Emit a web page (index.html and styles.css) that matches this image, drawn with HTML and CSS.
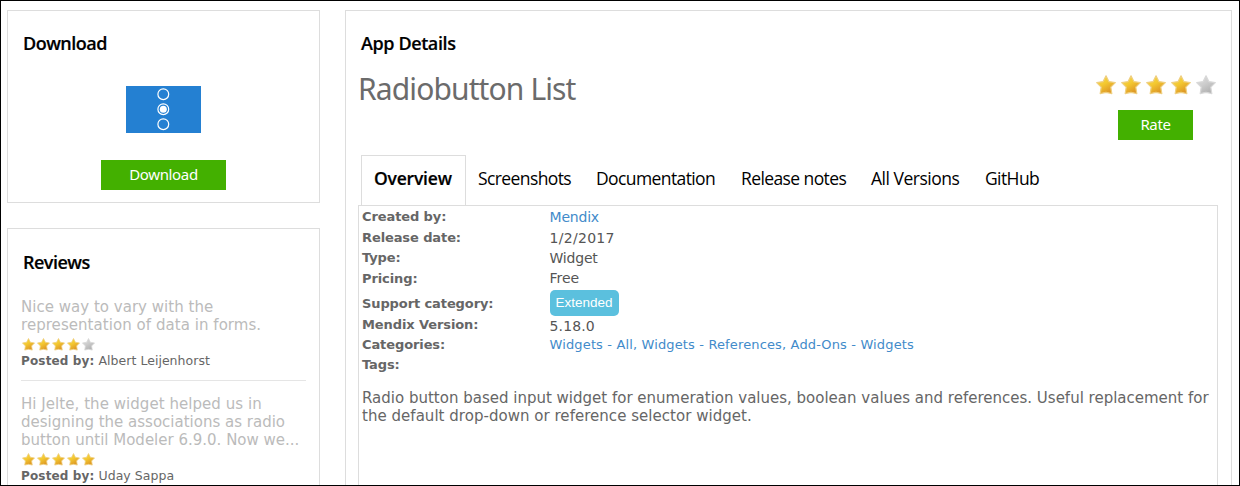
FILE: index.html
```html
<!DOCTYPE html>
<html lang="en">
<head>
<meta charset="utf-8">
<title>Radiobutton List</title>
<link rel="stylesheet" href="styles.css">
</head>
<body>
<svg class="defs" width="0" height="0" aria-hidden="true">
  <defs>
    <linearGradient id="gold" x1="0" y1="0" x2=".6" y2="1"><stop offset="0" stop-color="#f3da58"/><stop offset=".5" stop-color="#f4c931"/><stop offset="1" stop-color="#dc9424"/></linearGradient>
    <linearGradient id="silver" x1="0" y1="0" x2=".6" y2="1"><stop offset="0" stop-color="#dedede"/><stop offset=".5" stop-color="#cecece"/><stop offset="1" stop-color="#b0b0b0"/></linearGradient>
    <path id="star" d="M10 .8 12.9 6.6 19.3 7.6 14.8 12.2 15.8 18.6 10 17.3 4.2 18.6 5.2 12.2 .7 7.6 7.1 6.6Z" stroke-linejoin="round" stroke-width="1.2"/>
    <symbol id="on" viewBox="0 0 20 20"><use href="#star" fill="url(#gold)" stroke="#efcf80"/></symbol>
    <symbol id="off" viewBox="0 0 20 20"><use href="#star" fill="url(#silver)" stroke="#d8d8d8"/></symbol>
  </defs>
</svg>
<div class="page">
  <aside class="side">
    <section class="panel download">
      <h2 class="heading h-download">Download</h2>
      <svg class="app-icon" viewBox="0 0 75 47" width="75" height="47">
        <rect width="75" height="47" fill="#2480d2"/>
        <g fill="none" stroke="#fff" stroke-width="1.2"><circle cx="37.3" cy="8.2" r="5.4"/><circle cx="37.3" cy="23.2" r="5.4"/><circle cx="37.3" cy="38.2" r="5.4"/></g>
        <circle cx="37.3" cy="23.2" r="3.5" fill="#fff"/>
      </svg>
      <a class="button button-download">Download</a>
    </section>
    <section class="panel reviews">
      <h2 class="heading h-reviews">Reviews</h2>
      <article class="review">
        <p class="quote"><span class="q1">Nice way to vary with the</span><br><span class="q2">representation of data in forms.</span></p>
        <div class="stars small"><svg><use href="#on"/></svg><svg><use href="#on"/></svg><svg><use href="#on"/></svg><svg><use href="#on"/></svg><svg><use href="#off"/></svg></div>
        <p class="author"><b>Posted by:</b> <span>Albert Leijenhorst</span></p>
      </article>
      <article class="review second">
        <p class="quote"><span class="q3">Hi Jelte, the widget helped us in</span><br><span class="q4">designing the associations as radio</span><br><span class="q5">button until Modeler 6.9.0. Now we...</span></p>
        <div class="stars small"><svg><use href="#on"/></svg><svg><use href="#on"/></svg><svg><use href="#on"/></svg><svg><use href="#on"/></svg><svg><use href="#on"/></svg></div>
        <p class="author"><b>Posted by:</b> <span>Uday Sappa</span></p>
      </article>
    </section>
  </aside>
  <main class="panel details">
    <h2 class="heading h-details">App Details</h2>
    <div class="top">
      <h1 class="title">Radiobutton List</h1>
      <div class="rating">
        <div class="stars big"><svg><use href="#on"/></svg><svg><use href="#on"/></svg><svg><use href="#on"/></svg><svg><use href="#on"/></svg><svg><use href="#off"/></svg></div>
        <a class="button button-rate">Rate</a>
      </div>
    </div>
    <nav class="tabs">
      <a class="tab active">Overview</a>
      <a class="tab t-screens">Screenshots</a>
      <a class="tab t-docs">Documentation</a>
      <a class="tab t-notes">Release notes</a>
      <a class="tab t-versions">All Versions</a>
      <a class="tab t-github">GitHub</a>
    </nav>
    <div class="content">
      <dl class="facts">
        <dt>Created by:</dt><dd class="link mendix">Mendix</dd>
        <dt>Release date:</dt><dd class="date">1/2/2017</dd>
        <dt>Type:</dt><dd class="type">Widget</dd>
        <dt>Pricing:</dt><dd class="price">Free</dd>
        <dt class="support">Support category:</dt><dd><span class="badge">Extended</span></dd>
        <dt class="low">Mendix Version:</dt><dd class="version">5.18.0</dd>
        <dt class="low">Categories:</dt><dd class="link cats">Widgets - All, Widgets - References, Add-Ons - Widgets</dd>
        <dt class="low">Tags:</dt><dd></dd>
      </dl>
      <p class="description"><span class="d1">Radio button based input widget for enumeration values, boolean values and references. Useful replacement for</span><br><span class="d2">the default drop-down or reference selector widget.</span></p>
    </div>
  </main>
</div>
</body>
</html>
```
FILE: styles.css
```css
* { box-sizing: border-box; margin: 0; padding: 0; }
body { width: 1240px; height: 486px; overflow: hidden; background: #fff; font-family: "DejaVu Sans", sans-serif; color: #666; }
.defs { display: block; height: 0; }
.page { display: flex; gap: 25px; width: 1240px; height: 486px; padding: 9px 7px 0 6px; border: 1px solid #000; overflow: hidden; }
.side { width: 313px; display: flex; flex-direction: column; gap: 25px; flex: none; }
.panel { border: 1px solid #ddd; white-space: nowrap; flex: none; }
.heading { font: 600 18px/24px "Open Sans", sans-serif; color: #000; margin: 20px 0 0 15px; letter-spacing: -.5px; -webkit-text-stroke: .2px #000; }
.h-details { letter-spacing: -.4px; }
.download { height: 193px; display: flex; flex-direction: column; align-items: center; }
.download .heading { align-self: flex-start; }
.app-icon { margin-top: 31px; display: block; }
.button { display: block; height: 30px; background: #43b000; color: #fff; font: 15px/29px "Noto Sans", sans-serif; text-align: center; letter-spacing: -.35px; }
.button-download { width: 125px; margin-top: 27px; }
.button-rate { width: 75px; margin-left: 22px; }
.reviews { height: 300px; }
.h-reviews { margin-top: 21px; }
.review { margin: 24px 13px 0; height: 83px; border-bottom: 1px solid #e5e5e5; }
.second { margin-top: 14px; height: 110px; }
.quote { font-size: 15px; line-height: 18px; color: #bbb; }
.q1 { letter-spacing: .02px; }
.q2, .q3 { letter-spacing: .05px; }
.stars { display: flex; }
.small { height: 19px; padding: 4px 0 0 1px; gap: 2px; }
.small svg { width: 13px; height: 13px; }
.author { font-size: 12.5px; line-height: 15px; }
.author b { font-size: 12px; letter-spacing: .15px; }
.author span { letter-spacing: .03px; }
.details { width: 887px; height: 500px; }
.top { display: flex; justify-content: space-between; height: 89px; padding: 13px 14px 0 12px; }
.title { font: 400 30px/41px "Noto Sans", sans-serif; letter-spacing: -.88px; color: #6b6b6b; }
.rating { width: 121px; }
.big { gap: 5px; height: 42px; padding-top: 7px; }
.big svg { width: 20px; height: 20px; }
.tabs { display: flex; height: 51px; padding-left: 15px; margin-top: 11px; position: relative; z-index: 1; }
.tab { font: 17.5px/47px "Open Sans", sans-serif; color: #000; height: 50px; letter-spacing: -.6px; flex: none; padding-left: 12px; }
.active { width: 105px; border: 1px solid #ddd; border-bottom: 0; font-weight: 600; line-height: 45px; letter-spacing: -.2px; -webkit-text-stroke: .2px #000; background: #fff; }
.t-screens { width: 118px; }
.t-docs { width: 145px; }
.t-notes { width: 130px; }
.t-versions { width: 114px; letter-spacing: -.48px; }
.content { width: 860px; height: 320px; margin: -1px 0 0 12px; border: 1px solid #ddd; }
.facts { display: grid; grid-template-columns: 187.5px 1fr; grid-template-rows: 21px 20px 21px 20px 27px 20px 20px 20px; padding-left: 3px; }
.facts dt { font-size: 13px; font-weight: bold; line-height: 22px; letter-spacing: -.1px; }
.facts .support { line-height: 32px; }
.facts .low { line-height: 20px; }
.facts dd { font-size: 14px; line-height: 22px; color: #555; }
.facts .link { color: #428bca; }
.facts .mendix { letter-spacing: -.2px; }
.facts .date { letter-spacing: .3px; }
.facts .type { letter-spacing: -.2px; }
.facts .price { line-height: 20px; }
.facts .version { letter-spacing: .15px; }
.description { font-size: 15px; line-height: 18px; padding: 14px 0 0 3px; }
.d2 { letter-spacing: .03px; }
.facts .badge { display: block; width: 69px; height: 26px; margin-top: 2px; border-radius: 5px; background: #5bc0de; color: #fff; font: 13.5px/26px "Liberation Sans", sans-serif; text-align: center; }
.facts .cats { font-size: 13px; line-height: 20px; letter-spacing: .14px; }
```
